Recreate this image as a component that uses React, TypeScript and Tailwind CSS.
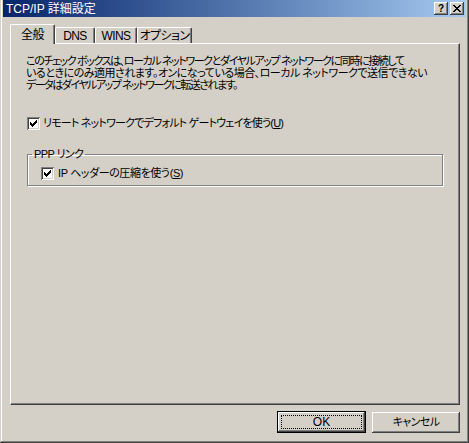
import React from "react";

const raised =
  "shadow-[inset_-1px_-1px_0_#404040,inset_1px_1px_0_#ffffff,inset_-2px_-2px_0_#808080]";

function Check() {
  return (
    <span className="inline-flex w-[13px] h-[13px] shrink-0 bg-white shadow-[inset_1px_1px_0_#808080,inset_-1px_-1px_0_#ffffff,inset_2px_2px_0_#404040,inset_-2px_-2px_0_#d4d0c8] items-center justify-center">
      <svg width="13" height="13" viewBox="0 0 13 13" shapeRendering="crispEdges">
        <path d="M3 5h1v1h1v1h1V6h1V5h1V4h1V3h1v3H9v1H8v1H7v1H6v1H5V9H4V8H3z" fill="#000" />
      </svg>
    </span>
  );
}

function Tab({ label, width, active }: { label: string; width: string; active?: boolean }) {
  return (
    <div
      className={
        active
          ? `relative z-10 -mb-px h-[20px] ${width} flex items-center justify-center bg-[#d4d0c8] border-l border-t border-white border-r border-r-[#404040] rounded-tl-[2px] rounded-tr-[2px] shadow-[inset_-1px_0_0_#808080]`
          : `h-[16px] ${width} flex items-center justify-center bg-[#d4d0c8] border-t border-white border-l border-r border-r-[#404040] rounded-tl-[2px] rounded-tr-[2px] shadow-[inset_-1px_0_0_#808080]`
      }
    >
      <span className="text-[12px] leading-none tracking-[-0.6px]">{label}</span>
    </div>
  );
}

export default function App() {
  return (
    <div className="w-[469px] h-[443px] overflow-hidden bg-[#d4d0c8] px-[3px] pb-[10px] flex flex-col text-black [font-family:'Liberation_Sans','Noto_Sans_CJK_JP',sans-serif] [font-feature-settings:'palt'] shadow-[inset_-1px_-1px_0_#404040,inset_1px_0_0_#d4d0c8,inset_-2px_-2px_0_#808080,inset_2px_0_0_#ffffff]">
      <div className="h-[17px] flex items-center justify-between bg-gradient-to-r from-[#0a246a] to-[#a6caf0] pl-[3px] pr-[2px]">
        <span className="text-white text-[12px] leading-none">TCP/IP 詳細設定</span>
        <div className="flex gap-[2px]">
          <div className={`w-[14px] h-[13px] bg-[#d4d0c8] ${raised} flex items-center justify-center`}>
            <span className="text-[10px] font-bold leading-none">?</span>
          </div>
          <div className={`w-[14px] h-[13px] bg-[#d4d0c8] ${raised} flex items-center justify-center`}>
            <svg width="8" height="7" viewBox="0 0 8 7" shapeRendering="crispEdges">
              <path d="M0 0h2v1h1v1h2V1h1V0h2v1H7v1H6v1H5v1h1v1h1v1h1v1H6V6H5V5H3v1H2v1H0V6h1V5h1V4h1V3H2V2H1V1H0z" fill="#000" />
            </svg>
          </div>
        </div>
      </div>

      <div className="mt-[7px] ml-[7px] mr-[6px] flex flex-col flex-1 min-w-0">
        <div className="flex items-end h-[19px]">
          <Tab label="全般" width="w-[45px]" active />
          <Tab label="DNS" width="w-[40px]" />
          <Tab label="WINS" width="w-[42px]" />
          <Tab label="オプション" width="w-[55px]" />
        </div>
        <div className="flex-1 border-t border-l border-white border-r border-b border-r-[#404040] border-b-[#404040] shadow-[inset_-1px_-1px_0_#808080] pt-[11px] pl-[15px] pr-[10px] overflow-hidden">
          <div className="text-[11px] leading-[12px] whitespace-nowrap">
            <div className="tracking-[-1.4px]">このチェック ボックスは、ローカル ネットワークとダイヤルアップ ネットワークに同時に接続して</div>
            <div className="tracking-[-0.5px]">いるときにのみ適用されます。オンになっている場合、ローカル ネットワークで送信できない</div>
            <div className="tracking-[-1.5px]">データはダイヤルアップ ネットワークに転送されます。</div>
          </div>

          <label className="mt-[26px] flex items-center gap-[3px] pl-px text-[11px] leading-[13px] tracking-[-0.8px]">
            <Check />
            <span>
              リモート ネットワークでデフォルト ゲートウェイを使う(<span className="underline">U</span>)
            </span>
          </label>

          <fieldset className="mt-[18px] ml-px w-[416px] h-[38px] border border-[#808080] shadow-[1px_1px_0_#ffffff,inset_1px_1px_0_#ffffff] px-[13px] pt-[7px]">
            <legend className="ml-[-9px] px-[2px] text-[11px] leading-[12px] tracking-[-0.6px]">PPP リンク</legend>
            <label className="flex items-center gap-[4px] text-[11px] leading-[13px] tracking-[-0.4px]">
              <Check />
              <span>
                IP ヘッダーの圧縮を使う(<span className="underline">S</span>)
              </span>
            </label>
          </fieldset>
        </div>

        <div className="mt-[6px] flex justify-end gap-[6px]">
          <button className="w-[89px] h-[22px] border border-black bg-[#d4d0c8] p-0">
            <div className={`w-full h-full ${raised} p-[3px]`}>
              <div className="w-full h-full border border-dotted border-black flex items-center justify-center text-[12px] leading-none">
                OK
              </div>
            </div>
          </button>
          <button className={`w-[88px] h-[21px] mt-px bg-[#d4d0c8] ${raised} flex items-center justify-center text-[11px] leading-none tracking-[-0.6px]`}>
            キャンセル
          </button>
        </div>
      </div>
    </div>
  );
}
